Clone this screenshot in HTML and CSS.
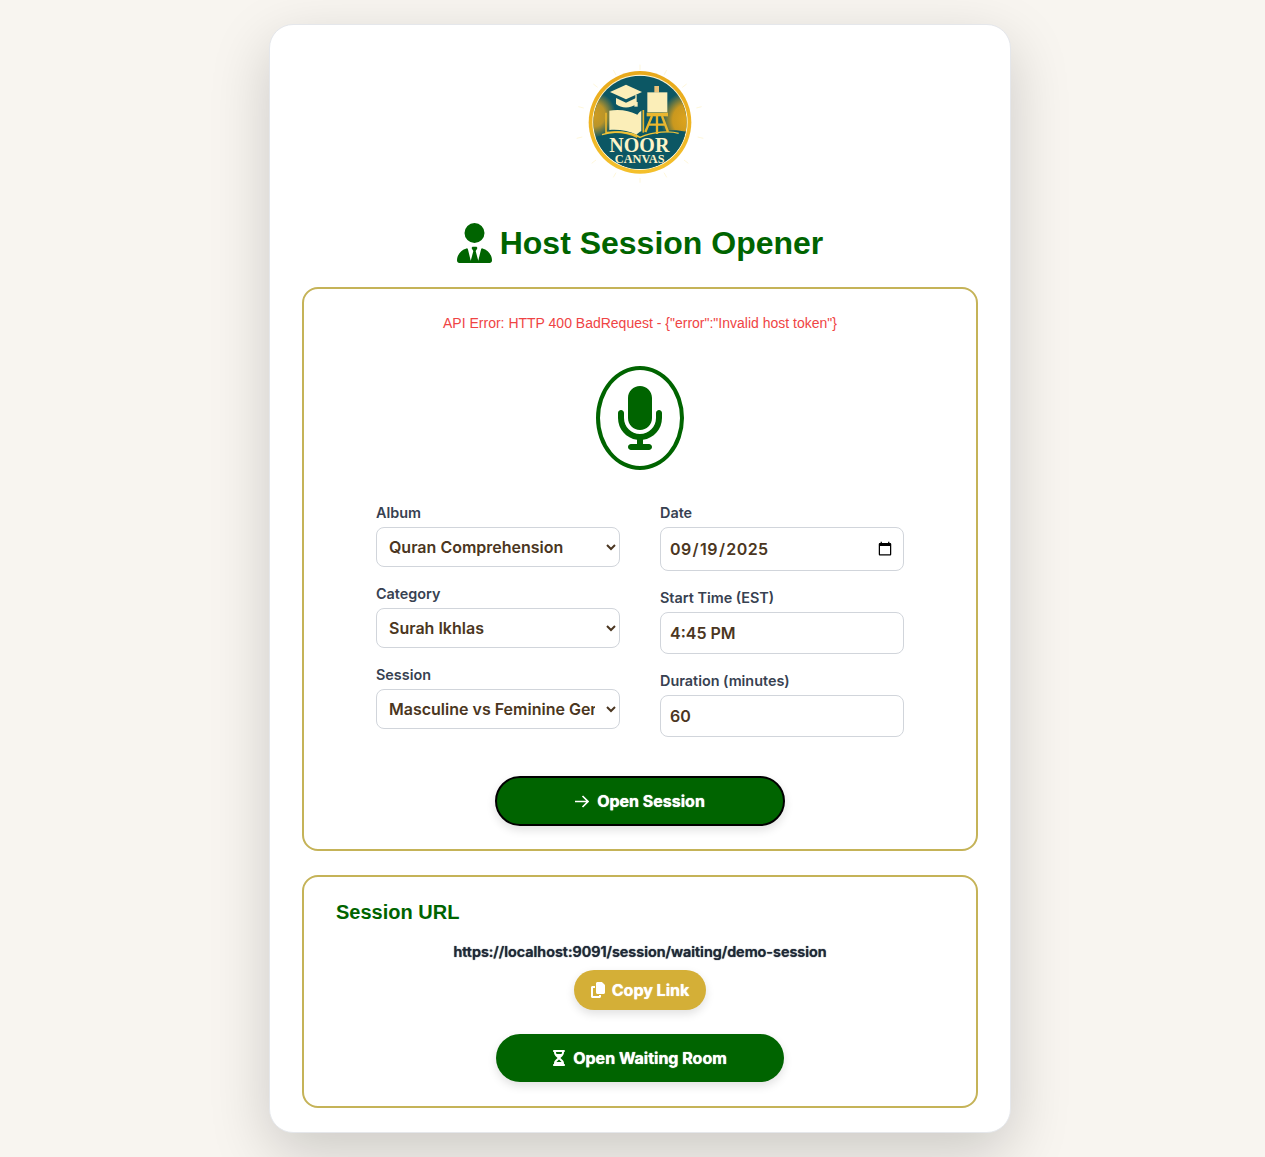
FILE: index.html
```html
<!DOCTYPE html>
<html lang="en">
<head>
<meta charset="utf-8">
<title>Host Session Opener</title>
<link rel="stylesheet" href="styles.css">
</head>
<body>
<main class="card">
  <div class="logo-wrap">
    <svg class="logo" viewBox="0 0 420 375" aria-label="Noor Canvas logo">
      <defs>
        <linearGradient id="ring" x1="0" y1="0" x2="0" y2="1">
          <stop offset="0" stop-color="#e8a91c"/>
          <stop offset="1" stop-color="#f4c02c"/>
        </linearGradient>
        <radialGradient id="glowR" cx=".5" cy=".5" r=".5">
          <stop offset="0" stop-color="#e0a51c"/>
          <stop offset=".55" stop-color="#c9981f"/>
          <stop offset="1" stop-color="#c9981f" stop-opacity="0"/>
        </radialGradient>
        <radialGradient id="glowL" cx=".5" cy=".5" r=".5">
          <stop offset="0" stop-color="#cf9c20"/>
          <stop offset=".5" stop-color="#b8942a"/>
          <stop offset="1" stop-color="#b8942a" stop-opacity="0"/>
        </radialGradient>
        <clipPath id="disc"><circle cx="210" cy="187" r="140"/></clipPath>
      </defs>
      <g stroke="#fdf3c8" stroke-width="2">
        <path d="M210 14V30M130 30l8 15M290 30l-8 15M70 72l13 10M350 72l-13 10M25 140l16 4M395 140l-16 4M20 235l17-4M400 235l-17-4M65 310l13-10M355 310l-13-10M130 352l8-14M290 352l-8-14M210 368v-14"/>
      </g>
      <circle cx="210" cy="187" r="154" fill="url(#ring)"/>
      <circle cx="210" cy="187" r="143" fill="#fdf6d8"/>
      <g clip-path="url(#disc)">
        <rect x="70" y="47" width="280" height="280" fill="#0c5764"/>
        <ellipse cx="352" cy="180" rx="80" ry="85" fill="url(#glowR)"/>
        <ellipse cx="72" cy="165" rx="66" ry="70" fill="url(#glowL)"/>
        <path d="M60 236c50-18 105-12 150 0 45-22 95-34 150-18v120H60z" fill="#0c5764"/>
      </g>
      <path d="M120 96l48-22 48 22-48 22z" fill="#fbeeb8"/>
      <path d="M138 114v18c14 14 46 14 60 0v-18l-30 14z" fill="#fbeeb8"/>
      <path d="M198 104v26" stroke="#fbeeb8" stroke-width="4"/>
      <rect x="193" y="126" width="10" height="14" fill="#fbeeb8"/>
      <path d="M118 152c30-6 60 0 84 12 4-6 8-10 12-12v62c-6 2-10 6-14 10-24-12-52-16-82-14z" fill="#fbeeb8"/>
      <path d="M108 158v60c34-4 68 0 94 14" fill="none" stroke="#e8b42c" stroke-width="5"/>
      <path d="M220 150v68" stroke="#e8b42c" stroke-width="5"/>
      <path d="M96 224c40-14 90-8 114 8 40-18 90-20 116-12" fill="none" stroke="#f2c53a" stroke-width="4"/>
      <path d="M253 78h14v20h-14z" fill="#e9c27a"/>
      <rect x="232" y="97" width="60" height="60" fill="#fbeeb8"/>
      <path d="M230 158h64v11h-64z" fill="#eab72f"/>
      <path d="M246 168l-20 48M261 168v54M276 168l18 48M234 194h54" fill="none" stroke="#eab72f" stroke-width="7"/>
      <text x="208" y="276" class="logo-noor" text-anchor="middle">NOOR</text>
      <text x="209" y="310" class="logo-canvas" text-anchor="middle">CANVAS</text>
    </svg>
  </div>

  <h1 class="title">
    <svg class="title-icon" viewBox="0 0 448 512"><path d="M96 128a128 128 0 1 0 256 0A128 128 0 1 0 96 128zm94.500 200.200l18.600 31L175.800 483.100l-36-146.900c-2-8.100-9.800-13.400-17.900-11.300C51.900 342.400 0 405.800 0 481.300c0 17 13.800 30.700 30.700 30.700H162.500c0 0 0 0 .1 0H168 280h5.500c0 0 0 0 .1 0H417.300c17 0 30.700-13.800 30.700-30.700c0-75.500-51.900-138.900-121.900-156.400c-8.100-2-15.900 3.300-17.900 11.300l-36 146.900L238.900 359.200l18.600-31c6.400-10.700-1.300-24.200-13.700-24.200H224 204.300c-12.400 0-20.100 13.600-13.700 24.200z"/></svg>
    <span>Host Session Opener</span>
  </h1>

  <section class="panel panel-form">
    <p class="error">API Error: HTTP 400 BadRequest - {"error":"Invalid host token"}</p>
    <div class="mic-ring">
      <svg class="mic" viewBox="0 0 384 512"><path d="M192 0C139 0 96 43 96 96V256c0 53 43 96 96 96s96-43 96-96V96c0-53-43-96-96-96zM64 216c0-13.300-10.700-24-24-24s-24 10.700-24 24v40c0 89.100 66.200 162.700 152 174.400V464H120c-13.300 0-24 10.700-24 24s10.700 24 24 24h72 72c13.300 0 24-10.700 24-24s-10.700-24-24-24H216V430.400c85.800-11.700 152-85.300 152-174.400V216c0-13.300-10.700-24-24-24s-24 10.700-24 24v40c0 70.700-57.300 128-128 128s-128-57.300-128-128V216z"/></svg>
    </div>
    <div class="form-grid">
      <div class="col">
        <div class="field">
          <label class="label" for="album">Album</label>
          <select class="control select" id="album"><option>Quran Comprehension</option></select>
        </div>
        <div class="field">
          <label class="label" for="category">Category</label>
          <select class="control select" id="category"><option>Surah Ikhlas</option></select>
        </div>
        <div class="field">
          <label class="label" for="session">Session</label>
          <select class="control select" id="session"><option>Masculine vs Feminine Gender</option></select>
        </div>
      </div>
      <div class="col">
        <div class="field">
          <label class="label" for="date">Date</label>
          <input class="control input input-date" id="date" type="date" value="2025-09-19">
        </div>
        <div class="field">
          <label class="label" for="time">Start Time (EST)</label>
          <input class="control input" id="time" type="text" value="4:45 PM">
        </div>
        <div class="field">
          <label class="label" for="duration">Duration (minutes)</label>
          <input class="control input" id="duration" type="text" value="60">
        </div>
      </div>
    </div>
    <button class="btn btn-open" type="button">
      <svg class="arrow" viewBox="0 0 14 13"><path d="M0 6.500H13M7.500 1l5.500 5.500L7.500 12" fill="none" stroke="#fff" stroke-width="1.700"/></svg>
      <span>Open Session</span>
    </button>
  </section>

  <section class="panel panel-url">
    <h2 class="url-title">Session URL</h2>
    <p class="url">https://localhost:9091/session/waiting/demo-session</p>
    <button class="btn btn-copy" type="button">
      <svg class="copy" viewBox="0 0 448 512"><path d="M208 0H332.100c12.700 0 24.900 5.100 33.900 14.100l67.900 67.900c9 9 14.100 21.200 14.100 33.900V336c0 26.500-21.500 48-48 48H208c-26.500 0-48-21.500-48-48V48c0-26.500 21.500-48 48-48zM48 128h80v64H64V448H256V416h64v48c0 26.500-21.500 48-48 48H48c-26.500 0-48-21.500-48-48V176c0-26.500 21.500-48 48-48z"/></svg>
      <span>Copy Link</span>
    </button>
    <button class="btn btn-wait" type="button">
      <svg class="hourglass" viewBox="0 0 384 512"><path d="M32 0C14.300 0 0 14.300 0 32S14.300 64 32 64V75c0 42.400 16.900 83.100 46.900 113.100L146.700 256 78.900 323.900C48.900 353.900 32 394.600 32 437v11c-17.700 0-32 14.300-32 32s14.300 32 32 32H64 320h32c17.700 0 32-14.300 32-32s-14.300-32-32-32V437c0-42.400-16.900-83.100-46.900-113.100L237.300 256l67.900-67.900c30-30 46.900-70.700 46.900-113.100V64c17.700 0 32-14.300 32-32s-14.300-32-32-32H320 64 32zM96 75V64H288V75c0 19-5.600 37.400-16 53H112c-10.300-15.600-16-34-16-53zm16 309c3.500-5.300 7.600-10.300 12.100-14.900L192 301.300l67.900 67.900c4.600 4.600 8.600 9.600 12.100 14.900H112z"/></svg>
      <span>Open Waiting Room</span>
    </button>
  </section>
</main>
</body>
</html>
```

FILE: styles.css
```css
* { box-sizing: border-box; }

html { margin: 0; padding: 0; overflow: hidden; }

body {
  margin: 0;
  width: 1280px;
  height: 1157px;
  padding: 24px 0;
  background: #f8f5f0;
  font-family: "Inter", "Liberation Sans", sans-serif;
}

.card {
  width: 742px;
  margin: 0 auto;
  background: #fff;
  border: 1px solid #e5e7eb;
  border-radius: 24px;
  box-shadow: 0 20px 60px rgba(0, 0, 0, .18);
  padding: 35px 32px 24px;
}

.logo-wrap { display: flex; justify-content: center; }
.logo { width: 140px; height: 125px; display: block; }
.logo-noor { font-family: "Liberation Serif", serif; font-size: 60px; font-weight: 700; fill: #fdf3c8; }
.logo-canvas { font-family: "Liberation Serif", serif; font-size: 37px; font-weight: 700; fill: #fdf3c8; }

.title {
  margin: 0;
  padding-top: 38px;
  display: flex;
  justify-content: center;
  align-items: center;
  gap: 8px;
  font-family: "Liberation Sans", sans-serif;
  font-size: 32px;
  font-weight: 700;
  line-height: 40px;
  color: #006400;
}
.title-icon { width: 35px; height: 40px; fill: #006400; display: block; }

.panel {
  background: #fff;
  border: 2px solid #c5b358;
  border-radius: 16px;
}

.panel-form {
  margin-top: 24px;
  height: 564px;
  padding: 26px 32px 0;
  display: flex;
  flex-direction: column;
  align-items: center;
}

.error {
  margin: 0;
  font-family: "Liberation Sans", sans-serif;
  font-size: 14px;
  line-height: 16px;
  color: #ef4444;
}

.mic-ring {
  margin-top: 35px;
  width: 88px;
  height: 104px;
  border: 4px solid #006400;
  border-radius: 50%;
  display: flex;
  align-items: center;
  justify-content: center;
}
.mic { width: 48px; height: 64px; fill: #006400; display: block; }

.form-grid {
  margin-top: 35px;
  width: 528px;
  display: grid;
  grid-template-columns: 244px 244px;
  gap: 40px;
}

.col { display: flex; flex-direction: column; gap: 19px; }

.label {
  display: block;
  font-size: 14.4px;
  font-weight: 600;
  line-height: 15px;
  margin-bottom: 7px;
  color: #374151;
}

.control {
  display: block;
  width: 100%;
  font-family: "Inter", sans-serif;
  font-size: 16px;
  font-weight: 600;
  color: #4b3621;
  background: #fff;
  border: 1px solid #d1d5db;
  border-radius: 8px;
}

.select { height: 40px; padding: 0 8px; }
.input { padding: 10px 9px; }
.input-date { letter-spacing: .4px; padding-left: 8px; padding-right: 8px; }

.btn {
  display: flex;
  align-items: center;
  justify-content: center;
  border: 0;
  border-radius: 999px;
  color: #fff;
  font-family: "Inter", sans-serif;
  font-size: 16px;
  font-weight: 700;
  text-shadow: 0 0 1px #fff;
  box-shadow: 0 4px 10px rgba(0, 0, 0, .12);
  cursor: pointer;
}

.btn-open {
  margin-top: 39px;
  width: 290px;
  height: 50px;
  gap: 8px;
  background: #006400;
  border: 2px solid #000;
}
.arrow { width: 14px; height: 13px; display: block; }

.panel-url {
  margin-top: 24px;
  height: 233px;
  padding: 23px 32px 0;
  display: flex;
  flex-direction: column;
  align-items: center;
}

.url-title {
  margin: 0;
  align-self: flex-start;
  font-family: "Liberation Sans", sans-serif;
  font-size: 20px;
  font-weight: 700;
  line-height: 24px;
  color: #006400;
}

.url {
  margin: 19px 0 0;
  font-size: 14.4px;
  font-weight: 600;
  line-height: 17px;
  color: #1f2937;
  text-shadow: 0 0 1px #1f2937;
}

.btn-copy {
  margin-top: 10px;
  width: 132px;
  height: 40px;
  gap: 7px;
  background: #d4af37;
}
.copy { width: 14px; height: 16px; fill: #fff; display: block; }

.btn-wait {
  margin-top: 24px;
  width: 288px;
  height: 48px;
  gap: 8px;
  background: #006400;
}
.hourglass { width: 12px; height: 16px; fill: #fff; display: block; }
```
